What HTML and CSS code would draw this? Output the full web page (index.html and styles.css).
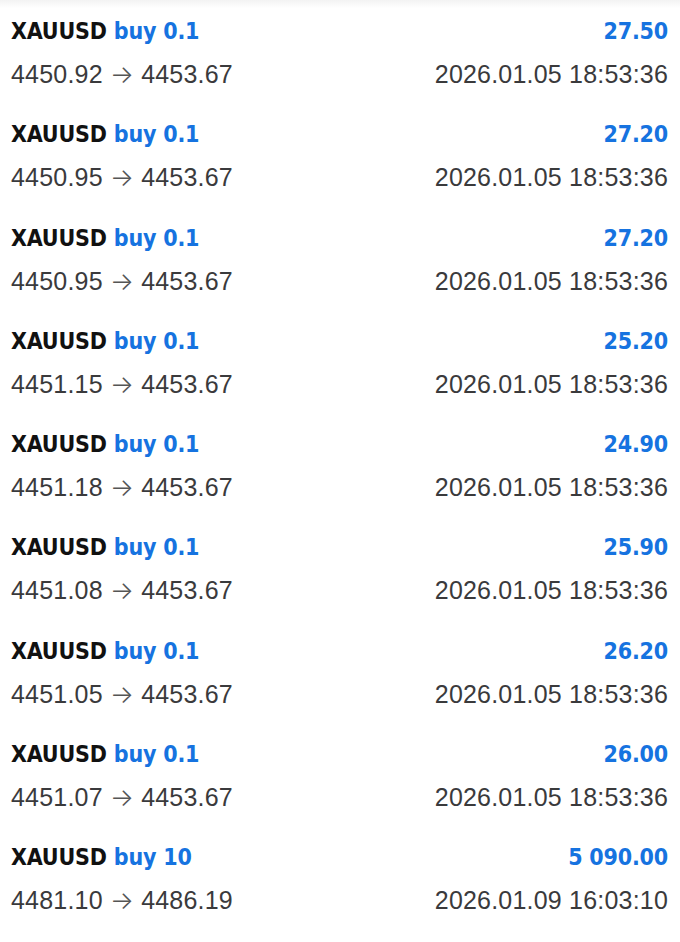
FILE: index.html
```html
<!DOCTYPE html>
<html lang="en">
<head>
    <meta charset="UTF-8">
    <meta name="viewport" content="width=device-width, initial-scale=1.0">
    <title>History</title>
    <link rel="stylesheet" href="styles.css">
</head>
<body>
    <div class="top-shade"></div>
    <ul class="deals">
        <li class="deal">
            <div class="line">
                <span class="symbol">XAUUSD <span class="side">buy 0.1</span></span>
                <span class="profit">27.50</span>
            </div>
            <div class="line meta">
                <span>4450.92 <span class="arrow">&rarr;</span> 4453.67</span>
                <span>2026.01.05 18:53:36</span>
            </div>
        </li>
        <li class="deal">
            <div class="line">
                <span class="symbol">XAUUSD <span class="side">buy 0.1</span></span>
                <span class="profit">27.20</span>
            </div>
            <div class="line meta">
                <span>4450.95 <span class="arrow">&rarr;</span> 4453.67</span>
                <span>2026.01.05 18:53:36</span>
            </div>
        </li>
        <li class="deal">
            <div class="line">
                <span class="symbol">XAUUSD <span class="side">buy 0.1</span></span>
                <span class="profit">27.20</span>
            </div>
            <div class="line meta">
                <span>4450.95 <span class="arrow">&rarr;</span> 4453.67</span>
                <span>2026.01.05 18:53:36</span>
            </div>
        </li>
        <li class="deal">
            <div class="line">
                <span class="symbol">XAUUSD <span class="side">buy 0.1</span></span>
                <span class="profit">25.20</span>
            </div>
            <div class="line meta">
                <span>4451.15 <span class="arrow">&rarr;</span> 4453.67</span>
                <span>2026.01.05 18:53:36</span>
            </div>
        </li>
        <li class="deal">
            <div class="line">
                <span class="symbol">XAUUSD <span class="side">buy 0.1</span></span>
                <span class="profit">24.90</span>
            </div>
            <div class="line meta">
                <span>4451.18 <span class="arrow">&rarr;</span> 4453.67</span>
                <span>2026.01.05 18:53:36</span>
            </div>
        </li>
        <li class="deal">
            <div class="line">
                <span class="symbol">XAUUSD <span class="side">buy 0.1</span></span>
                <span class="profit">25.90</span>
            </div>
            <div class="line meta">
                <span>4451.08 <span class="arrow">&rarr;</span> 4453.67</span>
                <span>2026.01.05 18:53:36</span>
            </div>
        </li>
        <li class="deal">
            <div class="line">
                <span class="symbol">XAUUSD <span class="side">buy 0.1</span></span>
                <span class="profit">26.20</span>
            </div>
            <div class="line meta">
                <span>4451.05 <span class="arrow">&rarr;</span> 4453.67</span>
                <span>2026.01.05 18:53:36</span>
            </div>
        </li>
        <li class="deal">
            <div class="line">
                <span class="symbol">XAUUSD <span class="side">buy 0.1</span></span>
                <span class="profit">26.00</span>
            </div>
            <div class="line meta">
                <span>4451.07 <span class="arrow">&rarr;</span> 4453.67</span>
                <span>2026.01.05 18:53:36</span>
            </div>
        </li>
        <li class="deal">
            <div class="line">
                <span class="symbol">XAUUSD <span class="side">buy 10</span></span>
                <span class="profit">5 090.00</span>
            </div>
            <div class="line meta">
                <span>4481.10 <span class="arrow">&rarr;</span> 4486.19</span>
                <span>2026.01.09 16:03:10</span>
            </div>
        </li>
    </ul>
</body>
</html>
```

FILE: styles.css
```css
body {
    margin: 0;
    padding: 0;
    background-color: #ffffff;
    font-family: "Liberation Sans", Arial, sans-serif;
    position: relative;
}
.top-shade {
    position: absolute;
    top: 0;
    left: 0;
    right: 0;
    height: 8px;
    background: linear-gradient(#f3f3f3, rgba(255, 255, 255, 0));
}
.deals {
    list-style: none;
    margin: 0;
    padding: 0 12px 0 11px;
}
.deal {
    box-sizing: border-box;
    height: 103.3px;
    padding-top: 13px;
}
.line {
    display: flex;
    justify-content: space-between;
    align-items: baseline;
}
.symbol,
.profit {
    font-family: "DejaVu Sans Condensed", "DejaVu Sans", sans-serif;
    font-stretch: condensed;
    font-weight: bold;
    font-size: 23px;
    letter-spacing: -0.2px;
    line-height: 36px;
    color: #111;
}
.side,
.profit {
    color: #1673e0;
}
.meta {
    margin-top: 8px;
    font-size: 25px;
    line-height: 34px;
    color: #3a3a3c;
    letter-spacing: 0.2px;
}
.arrow {
    font-family: Inter, "DejaVu Sans", sans-serif;
    font-weight: 300;
    color: #555;
}
```
